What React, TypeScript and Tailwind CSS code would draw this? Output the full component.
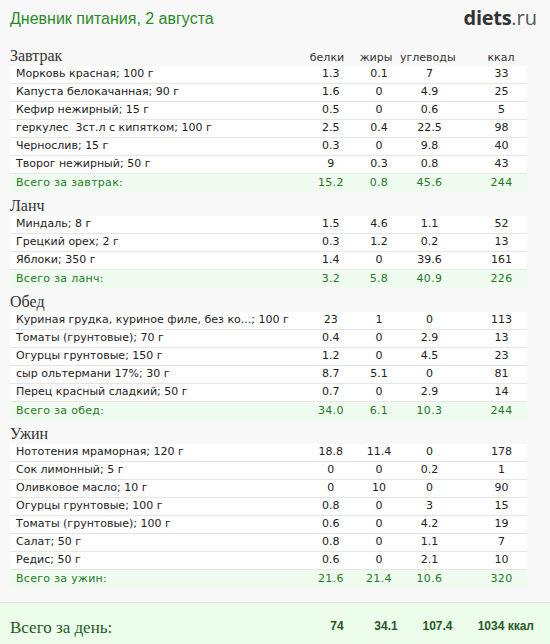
import React from 'react'

type Row = [string, string, string, string, string]

const MEALS: { title: string; rows: Row[]; total: Row }[] = [
  {
    title: 'Завтрак',
    rows: [
      ['Морковь красная; 100 г', '1.3', '0.1', '7', '33'],
      ['Капуста белокачанная; 90 г', '1.6', '0', '4.9', '25'],
      ['Кефир нежирный; 15 г', '0.5', '0', '0.6', '5'],
      ['геркулес  3ст.л с кипятком; 100 г', '2.5', '0.4', '22.5', '98'],
      ['Чернослив; 15 г', '0.3', '0', '9.8', '40'],
      ['Творог нежирный; 50 г', '9', '0.3', '0.8', '43'],
    ],
    total: ['Всего за завтрак:', '15.2', '0.8', '45.6', '244'],
  },
  {
    title: 'Ланч',
    rows: [
      ['Миндаль; 8 г', '1.5', '4.6', '1.1', '52'],
      ['Грецкий орех; 2 г', '0.3', '1.2', '0.2', '13'],
      ['Яблоки; 350 г', '1.4', '0', '39.6', '161'],
    ],
    total: ['Всего за ланч:', '3.2', '5.8', '40.9', '226'],
  },
  {
    title: 'Обед',
    rows: [
      ['Куриная грудка, куриное филе, без ко...; 100 г', '23', '1', '0', '113'],
      ['Томаты (грунтовые); 70 г', '0.4', '0', '2.9', '13'],
      ['Огурцы грунтовые; 150 г', '1.2', '0', '4.5', '23'],
      ['сыр ольтермани 17%; 30 г', '8.7', '5.1', '0', '81'],
      ['Перец красный сладкий; 50 г', '0.7', '0', '2.9', '14'],
    ],
    total: ['Всего за обед:', '34.0', '6.1', '10.3', '244'],
  },
  {
    title: 'Ужин',
    rows: [
      ['Нототения мраморная; 120 г', '18.8', '11.4', '0', '178'],
      ['Сок лимонный; 5 г', '0', '0', '0.2', '1'],
      ['Оливковое масло; 10 г', '0', '10', '0', '90'],
      ['Огурцы грунтовые; 100 г', '0.8', '0', '3', '15'],
      ['Томаты (грунтовые); 100 г', '0.6', '0', '4.2', '19'],
      ['Салат; 50 г', '0.8', '0', '1.1', '7'],
      ['Редис; 50 г', '0.6', '0', '2.1', '10'],
    ],
    total: ['Всего за ужин:', '21.6', '21.4', '10.6', '320'],
  },
]

const serif = { fontFamily: '"Liberation Serif", Georgia, serif' }

function Cells({ r }: { r: Row }) {
  return (
    <>
      <div className="w-[302px] pl-[6px] whitespace-pre truncate">{r[0]}</div>
      <div className="w-[50px] text-center">{r[1]}</div>
      <div className="w-[48px] text-center">{r[2]}</div>
      <div className="w-[55px] text-center">{r[3]}</div>
      <div className="w-[20px]" />
      <div className="w-[52px] text-center">{r[4]}</div>
    </>
  )
}

export default function App() {
  return (
    <div className="w-[550px] h-[644px] overflow-hidden bg-[#f8f8f8] text-[#222]" style={{ fontFamily: '"DejaVu Sans", Verdana, sans-serif' }}>
      <div className="flex items-start justify-between px-[10px] pt-[7px] h-[43px]">
        <div className="text-[16px] text-[#2a8a2a]" style={{ fontFamily: '"Liberation Sans", Arial, sans-serif' }}>Дневник питания, 2 августа</div>
        <div className="text-[20px] leading-none mr-[3px] mt-[1px] text-[#333]" style={{ fontFamily: '"Open Sans", sans-serif' }}>
          <span className="font-bold tracking-[-0.3px]">diets</span><span className="text-[#555]">.ru</span>
        </div>
      </div>

      <div className="px-[10px] w-[537px]">
        {MEALS.map((m, i) => (
          <div key={m.title}>
            <div className={`flex items-end ${i === 0 ? 'h-[23px]' : 'h-[24px]'} pb-[2px]`}>
              <div className="w-[302px] text-[16px] leading-none text-[#333]" style={serif}>{m.title}</div>
              {i === 0 && (
                <div className="flex text-[11px] text-[#333] leading-none mb-[1px]">
                  <div className="w-[50px] text-center">белки</div>
                  <div className="w-[48px] text-center">жиры</div>
                  <div className="w-[55px] text-center">углеводы</div>
                  <div className="w-[20px]" />
                  <div className="w-[52px] text-center">ккал</div>
                </div>
              )}
            </div>
            {m.rows.map((r, j) => (
              <div key={j} className="flex items-center h-[18px] bg-white border-b border-[#e6e6e6] text-[11px]">
                <Cells r={r} />
              </div>
            ))}
            <div className="flex items-center h-[18px] bg-[#f0fcf0] text-[11px] text-[#1f7a1f] tracking-[0.3px]">
              <Cells r={m.total} />
            </div>
          </div>
        ))}
      </div>

      <div className="mt-[14px] border-t border-[#e0e0e0] bg-[#ecfdec] h-[50px] flex items-start pt-[12px] px-[10px] text-[#1f5a1f]">
        <div className="w-[302px] text-[17px]" style={serif}>Всего за день:</div>
        <div className="flex text-[12px] font-bold mt-[2px]" style={{ fontFamily: '"Liberation Sans", Arial, sans-serif' }}>
          <div className="w-[50px] text-center">74</div>
          <div className="w-[48px] text-center">34.1</div>
          <div className="w-[55px] text-center">107.4</div>
          <div className="w-[72px] text-right pr-[3px]">1034 ккал</div>
        </div>
      </div>
    </div>
  )
}
